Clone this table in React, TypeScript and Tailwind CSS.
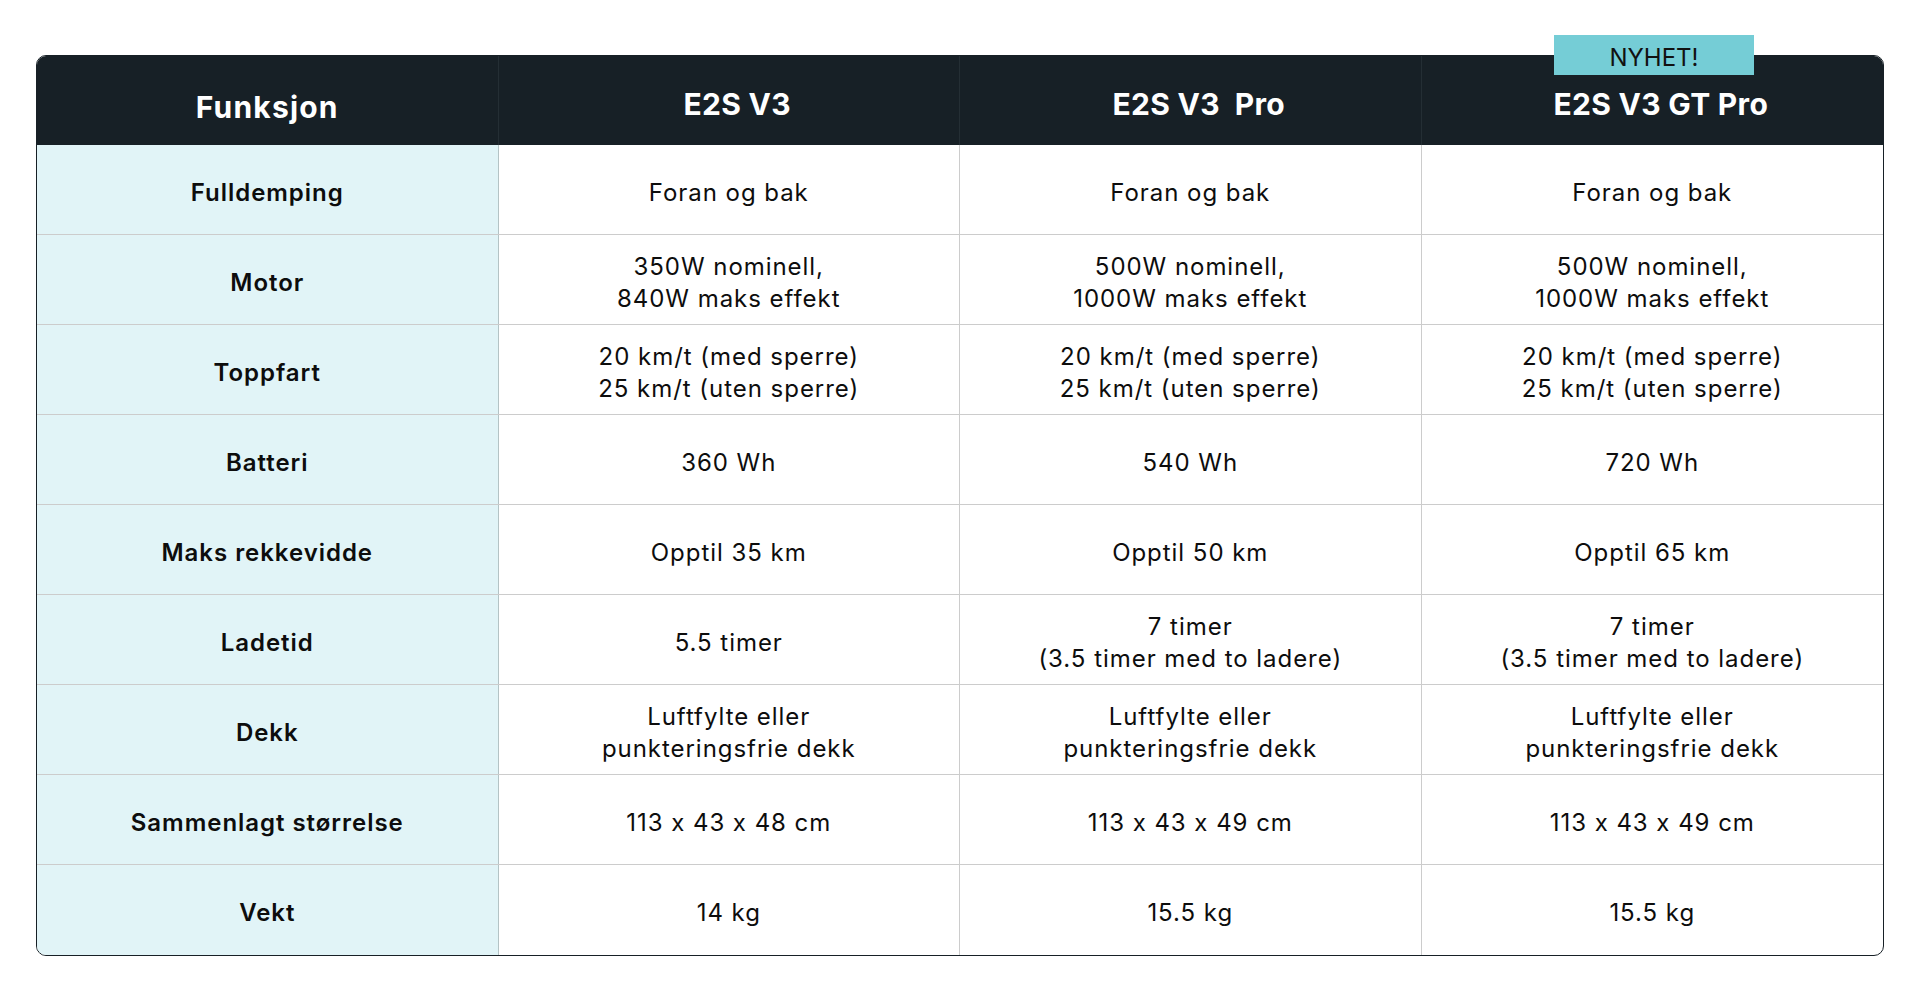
import React from "react";

const rows: { label: string; vals: string[][] }[] = [
  { label: "Fulldemping", vals: [["Foran og bak"], ["Foran og bak"], ["Foran og bak"]] },
  {
    label: "Motor",
    vals: [
      ["350W nominell,", "840W maks effekt"],
      ["500W nominell,", "1000W maks effekt"],
      ["500W nominell,", "1000W maks effekt"],
    ],
  },
  {
    label: "Toppfart",
    vals: [
      ["20 km/t (med sperre)", "25 km/t (uten sperre)"],
      ["20 km/t (med sperre)", "25 km/t (uten sperre)"],
      ["20 km/t (med sperre)", "25 km/t (uten sperre)"],
    ],
  },
  { label: "Batteri", vals: [["360 Wh"], ["540 Wh"], ["720 Wh"]] },
  { label: "Maks rekkevidde", vals: [["Opptil 35 km"], ["Opptil 50 km"], ["Opptil 65 km"]] },
  {
    label: "Ladetid",
    vals: [
      ["5.5 timer"],
      ["7 timer", "(3.5 timer med to ladere)"],
      ["7 timer", "(3.5 timer med to ladere)"],
    ],
  },
  {
    label: "Dekk",
    vals: [
      ["Luftfylte eller", "punkteringsfrie dekk"],
      ["Luftfylte eller", "punkteringsfrie dekk"],
      ["Luftfylte eller", "punkteringsfrie dekk"],
    ],
  },
  {
    label: "Sammenlagt størrelse",
    vals: [["113 x 43 x 48 cm"], ["113 x 43 x 49 cm"], ["113 x 43 x 49 cm"]],
  },
  { label: "Vekt", vals: [["14 kg"], ["15.5 kg"], ["15.5 kg"]] },
];

const font = { fontFamily: "Inter, 'DejaVu Sans', sans-serif" };

export default function App() {
  return (
    <div className="w-full h-[990px] bg-white" style={font}>
      <div className="pt-[55px] mx-[36px]">
        <div className="relative">
          <div className="absolute top-[-20px] right-[130px] w-[200px] h-[40px] bg-[#75CDD6] flex items-center justify-center pt-[6px] text-[24px] leading-[32px] text-[#111111] z-10">
            NYHET!
          </div>
          <div className="border border-[#172026] rounded-[10px] overflow-hidden">
            <div className="grid grid-cols-4 h-[89px] bg-[#172026] text-white font-bold text-[30px] tracking-[0.01em]">
              <div className="flex items-center justify-center pt-[14px] border-r border-[#242e34] tracking-[0.04em]">
                Funksjon
              </div>
              <div className="flex items-center justify-center pt-[8px] pl-[17px] border-r border-[#242e34]">
                E2S V3
              </div>
              <div className="flex items-center justify-center pt-[8px] pl-[17px] border-r border-[#242e34] whitespace-pre">
                E2S V3  Pro
              </div>
              <div className="flex items-center justify-center pt-[8px] pl-[17px]">E2S V3 GT Pro</div>
            </div>
            {rows.map((r, i) => (
              <div
                key={r.label}
                className={
                  "grid grid-cols-4 h-[90px] " + (i < rows.length - 1 ? "border-b border-black/20" : "")
                }
              >
                <div className="flex items-center justify-center bg-[#E1F4F7] border-r border-black/20 pt-[6px] text-[24px] leading-[32px] font-semibold text-[#0d0d0d] tracking-[0.04em]">
                  {r.label}
                </div>
                {r.vals.map((v, j) => (
                  <div
                    key={j}
                    className={
                      "flex flex-col items-center justify-center pt-[6px] text-[24px] leading-[32px] text-[#0d0d0d] tracking-[0.04em] " +
                      (j < 2 ? "border-r border-black/20" : "")
                    }
                  >
                    {v.map((line, k) => (
                      <span key={k}>{line}</span>
                    ))}
                  </div>
                ))}
              </div>
            ))}
          </div>
        </div>
      </div>
    </div>
  );
}
